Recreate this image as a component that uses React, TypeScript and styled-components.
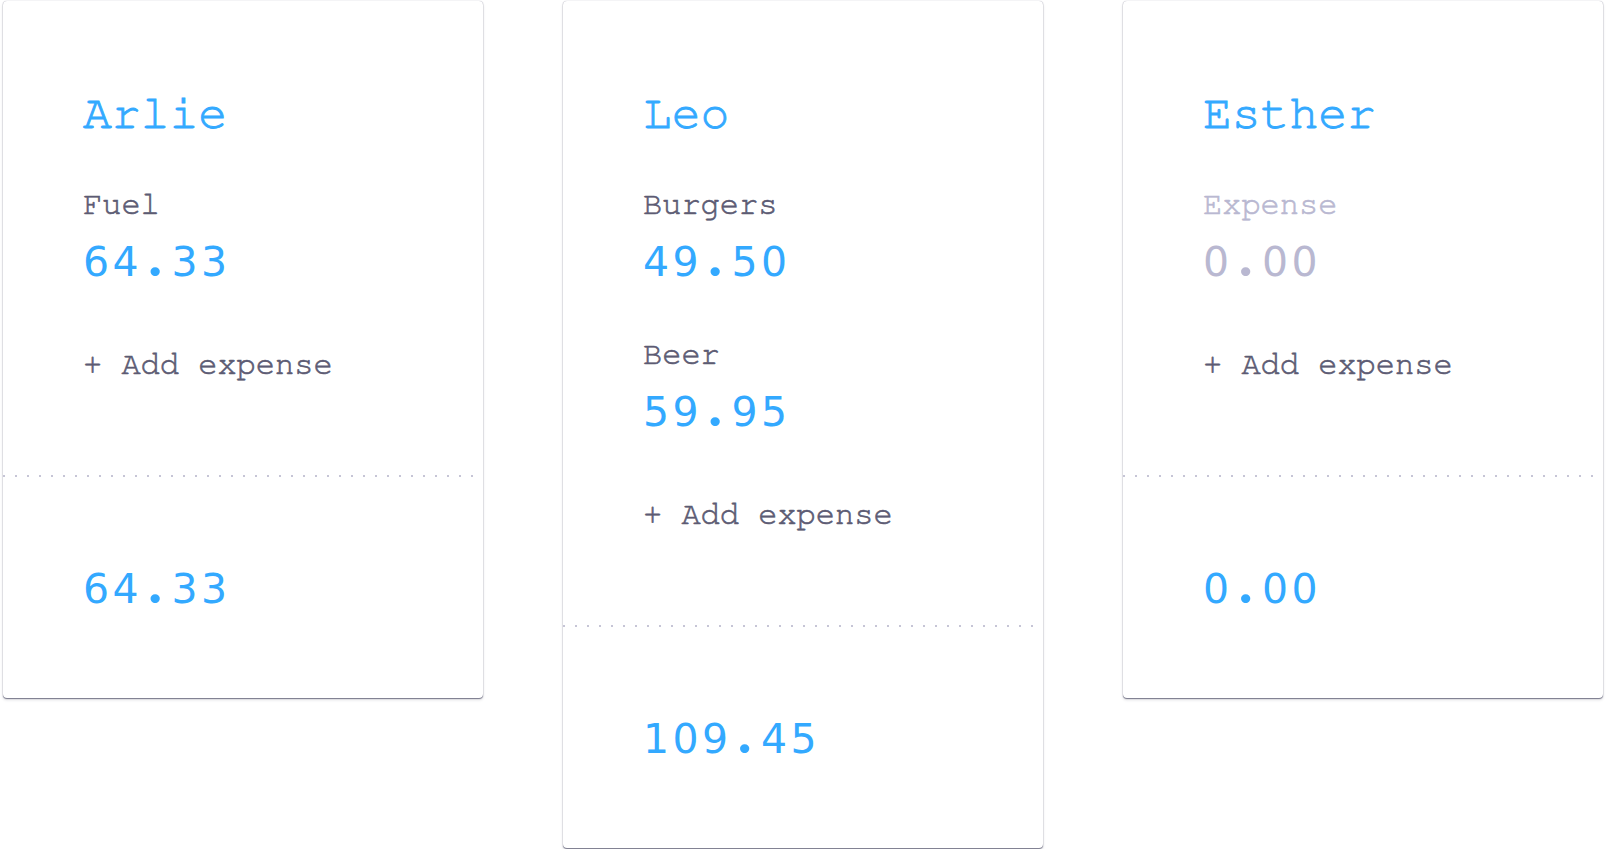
import React from "react";
import styled, { createGlobalStyle } from "styled-components";

const GlobalStyle = createGlobalStyle`
  html, body {
    margin: 0;
    padding: 0;
    background: #ffffff;
  }
  * { box-sizing: border-box; }
`;

const BLUE = "#33a9ff";
const GRAY = "#5c5b73";
const FAINT = "#b9b8d1";
const SERIF_MONO = `"FreeMono", "Courier New", monospace`;
const DIGITS = `"DejaVu Sans", "Liberation Sans", sans-serif`;

const Board = styled.div`
  display: flex;
  align-items: flex-start;
  gap: 80px;
  padding: 1px 3px;
`;

const Card = styled.section`
  width: 480px;
  background: #fff;
  border-radius: 4px;
  box-shadow: 0 1px 1px rgba(40, 40, 70, 0.55), 0 0 1px rgba(40, 40, 70, 0.45),
    0 2px 3px rgba(40, 40, 70, 0.15);
  display: flex;
  flex-direction: column;
`;

const Body = styled.div`
  padding: 89px 80px 95px;
  display: flex;
  flex-direction: column;
`;

const Name = styled.h2`
  margin: 0 0 50px;
  font-family: ${SERIF_MONO};
  font-weight: 400;
  font-size: 48px;
  line-height: 48px;
  -webkit-text-stroke: 0.9px currentColor;
  color: ${BLUE};
`;

const Item = styled.div`
  display: flex;
  flex-direction: column;
  margin-bottom: 55px;
`;

const Label = styled.div<{ $placeholder?: boolean }>`
  font-family: ${SERIF_MONO};
  font-size: 32px;
  line-height: 32px;
  -webkit-text-stroke: 0.6px currentColor;
  color: ${(p) => (p.$placeholder ? FAINT : GRAY)};
  margin-bottom: 21px;
`;

const AmountText = styled.div<{ $placeholder?: boolean }>`
  font-family: ${DIGITS};
  font-size: 41px;
  line-height: 42px;
  letter-spacing: 3.4px;
  white-space: nowrap;
  color: ${(p) => (p.$placeholder ? FAINT : BLUE)};
`;

const Point = styled.span`
  display: inline-block;
  width: 29.5px;
  padding-right: 3px;
  text-align: center;
  letter-spacing: 0;
  font-family: "Lato", sans-serif;
  font-weight: 900;
  font-size: 56px;
  line-height: 0;
`;

function Amount({ value, placeholder }: { value: string; placeholder?: boolean }) {
  const [whole, frac] = value.split(".");
  return (
    <AmountText $placeholder={placeholder}>
      {whole}
      <Point>.</Point>
      {frac}
    </AmountText>
  );
}

const AddButton = styled.button`
  align-self: flex-start;
  margin: 10px 0 0;
  padding: 0;
  border: 0;
  background: none;
  font-family: ${SERIF_MONO};
  font-size: 32px;
  line-height: 32px;
  -webkit-text-stroke: 0.6px currentColor;
  color: ${GRAY};
  cursor: pointer;
  text-align: left;
`;

const Divider = styled.div`
  height: 2px;
  background-image: linear-gradient(to right, #c6c5d6 2px, transparent 2px);
  background-size: 12px 2px;
  background-repeat: repeat-x;
`;

const Footer = styled.div`
  padding: 91px 80px 88px;
`;

type Expense = { label: string; amount: string };
type Person = { name: string; expenses: Expense[]; total: string };

const people: Person[] = [
  { name: "Arlie", expenses: [{ label: "Fuel", amount: "64.33" }], total: "64.33" },
  {
    name: "Leo",
    expenses: [
      { label: "Burgers", amount: "49.50" },
      { label: "Beer", amount: "59.95" },
    ],
    total: "109.45",
  },
  { name: "Esther", expenses: [], total: "0.00" },
];

export default function App() {
  return (
    <>
      <GlobalStyle />
      <Board>
        {people.map((p) => (
          <Card key={p.name}>
            <Body>
              <Name>{p.name}</Name>
              {p.expenses.length > 0 ? (
                p.expenses.map((e) => (
                  <Item key={e.label}>
                    <Label>{e.label}</Label>
                    <Amount value={e.amount} />
                  </Item>
                ))
              ) : (
                <Item>
                  <Label $placeholder>Expense</Label>
                  <Amount value="0.00" placeholder />
                </Item>
              )}
              <AddButton>+ Add expense</AddButton>
            </Body>
            <Divider />
            <Footer>
              <Amount value={p.total} />
            </Footer>
          </Card>
        ))}
      </Board>
    </>
  );
}
